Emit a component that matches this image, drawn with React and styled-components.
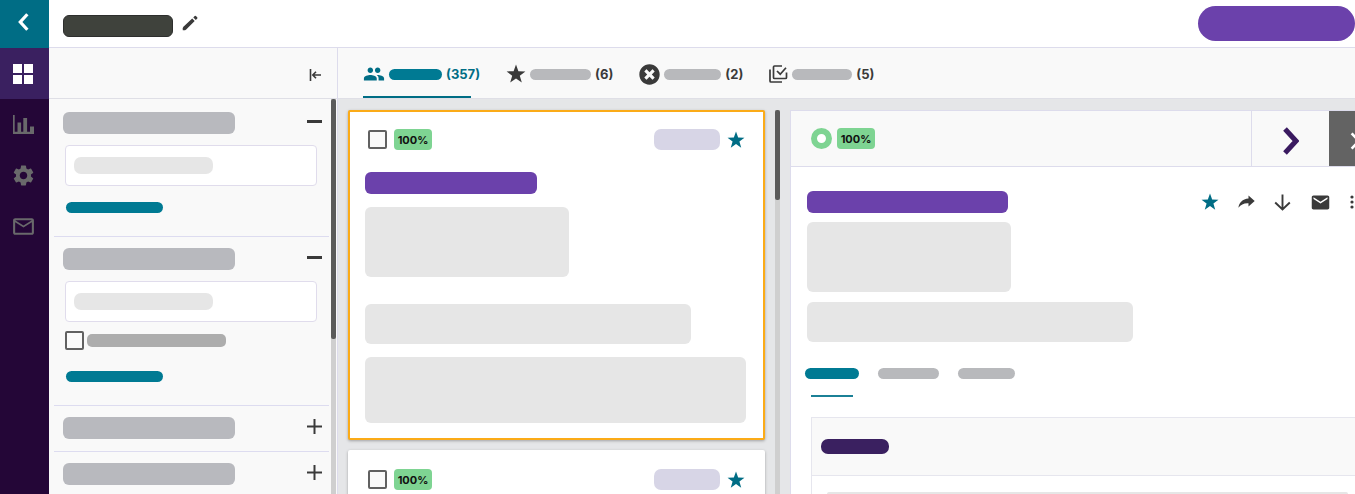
import React, { useState } from "react";
import styled, { createGlobalStyle, css } from "styled-components";
import { MdPeople, MdSettings, MdMailOutline, MdEmail } from "react-icons/md";
import { FaTimesCircle } from "react-icons/fa";

const Global = createGlobalStyle`
  * {
    box-sizing: border-box;
  }
  body {
    margin: 0;
    background: #ffffff;
    font-family: Inter, "Liberation Sans", sans-serif;
  }
  button {
    padding: 0;
    border: none;
    background: none;
    font: inherit;
    color: inherit;
    cursor: pointer;
  }
`;

//icons
const StarIcon = ({ size = 18 }) => (
  <svg width={size} height={size} viewBox="0 0 20 20" fill="currentColor">
    <path d="M10 .6l2.4 6.6 7 .2-5.600 4.300 2 6.800L10 14.500l-5.800 4 2-6.800L.6 7.400l7-.2z" />
  </svg>
);

const PencilIcon = () => (
  <svg width="16" height="16" viewBox="0 0 16 16" fill="#3a3a3a">
    <path d="M.8 15.200q-.6-2.200.6-3.400L10.200 3.600l2.500 2.500-8.500 8.300q-1.400 1.200-3.400.8z" />
    <path d="M11.300 2.400l1.400-1.400q.6-.5 1.200 0l1.300 1.300q.5.6 0 1.200L13.800 4.900z" />
  </svg>
);

const CollapseIcon = () => (
  <svg width="13" height="14" viewBox="0 0 13 14" fill="none" stroke="#3a3a3a" strokeWidth="1.6">
    <path d="M1.500 1v12M3.500 7H12M7 3.800L3.800 7 7 10.200" />
  </svg>
);

const ChartIcon = () => (
  <svg width="21" height="19" viewBox="0 0 21 19" fill="currentColor">
    <path d="M0 0h1.700v16.800h2.800V7.500h3.600v9.300h2.200V3h3.800v13.800h2.900v-5.300H21V19H0z" />
  </svg>
);

const GridIcon = () => (
  <svg width="20" height="20" viewBox="0 0 20 20" fill="currentColor">
    <path d="M0 0h9v9H0zM11 0h9v9h-9zM0 11h9v9H0zM11 11h9v9h-9z" />
  </svg>
);

const StackCheckIcon = () => (
  <svg width="19" height="18" viewBox="0 0 19 18" fill="none" stroke="currentColor" strokeWidth="1.700">
    <path d="M1 4.500v11.500q0 1 1 1h11" />
    <path d="M13 1H5.500q-1 0-1 1v10.500q0 1 1 1h11q1 0 1-1V7.500" />
    <path d="M8 6l3.200 3.200L17 2.800" />
  </svg>
);

const ShareIcon = () => (
  <svg width="17" height="14" viewBox="0 0 17 14" fill="currentColor">
    <path d="M10.500.5L16.700 6l-6.200 5.500V8.300C6 8 3 9.500.4 12.800 1 8 4.500 4 10.500 3.600z" />
  </svg>
);

const DownIcon = () => (
  <svg width="17" height="17" viewBox="0 0 17 17" fill="none" stroke="currentColor" strokeWidth="1.900">
    <path d="M8.500.5v15M1.200 8.500l7.300 7 7.300-7" />
  </svg>
);

const DotsIcon = () => (
  <svg width="4" height="14" viewBox="0 0 4 14" fill="currentColor">
    <circle cx="2" cy="2" r="1.600" />
    <circle cx="2" cy="7" r="1.600" />
    <circle cx="2" cy="12" r="1.600" />
  </svg>
);

const Chevron = ({ width, height, stroke, left }) => (
  <svg
    width={width}
    height={height}
    viewBox="0 0 16 28"
    fill="none"
    stroke="currentColor"
    strokeWidth={stroke}
  >
    <path d={left ? "M14 2L3 14l11 12" : "M2 2l11 12L2 26"} />
  </svg>
);

const ToggleIcon = ({ open }) => (
  <svg width="15" height="15" viewBox="0 0 15 15" fill="none" stroke="#3a3a3a">
    <path d="M0 7.500h15" strokeWidth={open ? 3 : 2} />
    {!open && <path d="M7.500 0v15" strokeWidth="2" />}
  </svg>
);

const filters = [
  { id: "first", open: true },
  { id: "second", open: true, check: true },
  { id: "third", open: false },
  { id: "fourth", open: false }
];

const tabs = [
  { id: "all", icon: <MdPeople size={22} />, width: 53, count: 357 },
  { id: "starred", icon: <StarIcon size={20} />, width: 61, count: 6 },
  { id: "rejected", icon: <FaTimesCircle size={21} />, width: 57, count: 2 },
  { id: "selected", icon: <StackCheckIcon />, width: 60, count: 5 }
];

const FilterSection = ({ filter }) => {
  const [open, setOpen] = useState(filter.open);
  return (
    <Section $open={open}>
      <SectionHead
        aria-label="Toggle filter"
        aria-expanded={open}
        onClick={() => setOpen(!open)}
      >
        <Bar $w={172} $h={22} $r={6} $color="#b8b9be" />
        <ToggleIcon open={open} />
      </SectionHead>
      {open && (
        <SectionBody>
          <Field>
            <Bar $w={139} $h={17} $r={7} $color="#e6e6e6" />
            <FieldInput type="text" aria-label="Filter value" />
          </Field>
          {filter.check && (
            <CheckRow>
              <Checkbox type="checkbox" aria-label="Include" />
              <Bar $w={139} $h={13} $r={5} $color="#adadad" />
            </CheckRow>
          )}
          <FilterLink href="#" aria-label="More options" $far={filter.check}>
            <Bar $w={97} $h={11} $r={6} $color="#007a93" />
          </FilterLink>
        </SectionBody>
      )}
    </Section>
  );
};

const CandidateCard = ({ selected }) => (
  <Card $selected={selected}>
    <CardTop>
      <Checkbox type="checkbox" aria-label="Select candidate" />
      <Badge>100%</Badge>
      <Spacer />
      <Bar $w={66} $h={21} $r={7} $color="#d7d5e6" />
      <StarButton aria-label="Star">
        <StarIcon />
      </StarButton>
    </CardTop>
    <Bar $w={172} $h={22} $r={6} $color="#6b41ab" />
    <CardBlocks>
      <Bar $w={204} $h={70} $r={6} $color="#e6e6e6" />
      <Bar $w={326} $h={40} $r={6} $color="#e6e6e6" $gap={27} />
      <Bar $h={66} $r={6} $color="#e6e6e6" $gap={13} />
    </CardBlocks>
  </Card>
);

const App = () => {
  const [tab, setTab] = useState("all");

  return (
    <>
      <Global />
      <Page>
        <Rail>
          <BackButton aria-label="Back">
            <Chevron left width={11} height={18} stroke={5} />
          </BackButton>
          <RailLink href="#" aria-label="Dashboard" $active>
            <GridIcon />
          </RailLink>
          <RailLink href="#" aria-label="Reports">
            <ChartIcon />
          </RailLink>
          <RailLink href="#" aria-label="Settings">
            <MdSettings size={25} />
          </RailLink>
          <RailLink href="#" aria-label="Messages">
            <MdMailOutline size={25} />
          </RailLink>
        </Rail>
        <Main>
          <Header>
            <TitleBar />
            <EditButton aria-label="Edit title">
              <PencilIcon />
            </EditButton>
            <Spacer />
            <ActionButton aria-label="Primary action" />
          </Header>
          <Body>
            <Sidebar>
              <SidebarHead>
                <button aria-label="Collapse filters">
                  <CollapseIcon />
                </button>
              </SidebarHead>
              <SidebarScroll>
                <FilterList>
                  {filters.map(filter => (
                    <FilterSection key={filter.id} filter={filter} />
                  ))}
                </FilterList>
                <Track>
                  <Thumb $h={240} />
                </Track>
              </SidebarScroll>
            </Sidebar>
            <Content>
              <TabBar>
                {tabs.map(item => (
                  <Tab
                    key={item.id}
                    $active={tab === item.id}
                    onClick={() => setTab(item.id)}
                  >
                    {item.icon}
                    <Bar
                      $w={item.width}
                      $h={11}
                      $r={6}
                      $color={tab === item.id ? "#007a93" : "#b8b9bc"}
                    />
                    <span>({item.count})</span>
                  </Tab>
                ))}
              </TabBar>
              <Columns>
                <CardList>
                  <CandidateCard selected />
                  <CandidateCard />
                </CardList>
                <Track>
                  <Thumb $h={90} />
                </Track>
                <Detail>
                  <DetailHead>
                    <Ring />
                    <Badge>100%</Badge>
                    <Spacer />
                    <NextButton aria-label="Next candidate">
                      <Chevron width={16} height={28} stroke={5} />
                    </NextButton>
                    <CloseButton aria-label="Close panel">
                      <Chevron width={11} height={18} stroke={4} />
                    </CloseButton>
                  </DetailHead>
                  <DetailBody>
                    <Summary>
                      <SummaryTop>
                        <Bar $w={201} $h={22} $r={6} $color="#6b41ab" />
                        <Actions>
                          <StarButton aria-label="Star">
                            <StarIcon />
                          </StarButton>
                          <button aria-label="Share">
                            <ShareIcon />
                          </button>
                          <button aria-label="Download">
                            <DownIcon />
                          </button>
                          <button aria-label="Email">
                            <MdEmail size={21} />
                          </button>
                          <button aria-label="More">
                            <DotsIcon />
                          </button>
                        </Actions>
                      </SummaryTop>
                      <Bar $w={204} $h={70} $r={6} $color="#e6e6e6" $gap={9} />
                      <Bar $w={326} $h={40} $r={6} $color="#e6e6e6" $gap={10} />
                    </Summary>
                    <DetailTabs>
                      <DetailTab aria-label="Overview" $active>
                        <Bar $w={54} $h={11} $r={6} $color="#007a93" />
                      </DetailTab>
                      <DetailTab aria-label="Activity">
                        <Bar $w={61} $h={11} $r={6} $color="#b8b9bc" />
                      </DetailTab>
                      <DetailTab aria-label="Notes">
                        <Bar $w={57} $h={11} $r={6} $color="#b8b9bc" />
                      </DetailTab>
                    </DetailTabs>
                    <Box>
                      <BoxHead>
                        <Bar $w={68} $h={15} $r={7} $color="#3a2060" />
                      </BoxHead>
                      <BoxBody>
                        <Bar $h={40} $r={2} $color="#e6e6e6" />
                      </BoxBody>
                    </Box>
                  </DetailBody>
                </Detail>
              </Columns>
            </Content>
          </Body>
        </Main>
      </Page>
    </>
  );
};

export default App;

const Page = styled.div`
  display: flex;
  height: 100vh;
  overflow: hidden;
  color: #3a3a3a;
  svg {
    display: block;
    flex-shrink: 0;
  }
`;
const Bar = styled.span`
  display: block;
  flex-shrink: 0;
  width: ${p => (p.$w ? `${p.$w}px` : "100%")};
  height: ${p => p.$h}px;
  margin-top: ${p => p.$gap || 0}px;
  border-radius: ${p => p.$r}px;
  background: ${p => p.$color};
`;
const Spacer = styled.div`
  flex: 1;
`;

//left rail
const Rail = styled.nav`
  display: flex;
  flex-direction: column;
  flex-shrink: 0;
  width: 49px;
  background: #240637;
`;
const railItem = css`
  display: flex;
  align-items: center;
  justify-content: center;
  padding-right: 3px;
`;
const BackButton = styled.button`
  ${railItem}
  height: 48px;
  padding: 0 2px 4px 0;
  background: #006d85;
  color: #ffffff;
`;
const RailLink = styled.a`
  ${railItem}
  height: 51px;
  color: ${p => (p.$active ? "#ffffff" : "#69696b")};
  background: ${p => (p.$active ? "#3a2060" : "transparent")};
`;

//header
const Main = styled.div`
  display: flex;
  flex-direction: column;
  flex: 1;
  min-width: 0;
`;
const Header = styled.header`
  display: flex;
  align-items: flex-start;
  height: 48px;
  padding: 6px 0 0 14px;
  border-bottom: 1px solid #dddcec;
`;
const TitleBar = styled.div`
  width: 110px;
  height: 22px;
  margin-top: 9px;
  border: 1px solid #2d2e2d;
  border-radius: 6px;
  background: #3f423c;
`;
const EditButton = styled.button`
  margin: 9px 0 0 9px;
`;
const ActionButton = styled.button`
  width: 157px;
  height: 35px;
  border-radius: 18px;
  background: #6b41ab;
`;

//filters
const Body = styled.div`
  display: flex;
  flex: 1;
  min-height: 0;
`;
const Sidebar = styled.aside`
  display: flex;
  flex-direction: column;
  flex-shrink: 0;
  width: 289px;
  border-right: 1px solid #dddcec;
  background: #f9f9f9;
`;
const SidebarHead = styled.div`
  display: flex;
  align-items: center;
  justify-content: flex-end;
  flex-shrink: 0;
  height: 51px;
  padding: 3px 15px 0 0;
  border-bottom: 1px solid #dfdfe6;
`;
const SidebarScroll = styled.div`
  display: flex;
  flex: 1;
  min-height: 0;
  padding-right: 1px;
`;
const FilterList = styled.div`
  flex: 1;
  padding: 2px 2px 0 5px;
  overflow: hidden;
`;
const Section = styled.section`
  padding: 11px 7px ${p => (p.$open ? 23 : 12)}px 9px;
  border-bottom: 1px solid #dddcf0;
`;
const SectionHead = styled.button`
  display: flex;
  align-items: center;
  justify-content: space-between;
  width: 100%;
  svg {
    margin-bottom: 3px;
  }
`;
const SectionBody = styled.div`
  padding: 11px 5px 0 2px;
`;
const Field = styled.label`
  display: flex;
  align-items: center;
  height: 41px;
  padding: 0 8px;
  border: 1px solid #e0dcec;
  border-radius: 4px;
  background: #ffffff;
`;
const FieldInput = styled.input`
  flex: 1;
  min-width: 0;
  height: 100%;
  border: none;
  outline: none;
  background: transparent;
`;
const CheckRow = styled.label`
  display: flex;
  align-items: center;
  gap: 3px;
  margin-top: 9px;
`;
const Checkbox = styled.input`
  appearance: none;
  flex-shrink: 0;
  width: 19px;
  height: 19px;
  margin: 0;
  border: 2px solid #616161;
  border-radius: 2px;
  background: #fafafa;
`;
const FilterLink = styled.a`
  display: block;
  width: fit-content;
  margin: ${p => (p.$far ? 21 : 16)}px 0 0 1px;
`;
const Track = styled.div`
  flex-shrink: 0;
  width: 5px;
  background: #cfcfcf;
`;
const Thumb = styled.div`
  height: ${p => p.$h}px;
  border-radius: 2px;
  background: #5b5b5b;
`;

//tabs
const Content = styled.div`
  display: flex;
  flex-direction: column;
  flex: 1;
  min-width: 0;
  background: #e5e6e8;
`;
const TabBar = styled.div`
  display: flex;
  flex-shrink: 0;
  gap: 26px;
  height: 51px;
  padding-left: 25px;
  border-bottom: 1px solid #dfdfe6;
  background: #f9f9f9;
`;
const Tab = styled.button`
  display: flex;
  align-items: center;
  gap: 4px;
  padding-top: 2px;
  color: ${p => (p.$active ? "#006d85" : "#3a3a3a")};
  font-size: 13px;
  font-weight: 700;
  ${p =>
    p.$active &&
    css`
      background: linear-gradient(#006d85, #006d85) left bottom /
        calc(100% - 9px) 2px no-repeat;
    `}
`;

//cards
const Columns = styled.div`
  display: flex;
  flex: 1;
  gap: 10px;
  min-height: 0;
  padding: 11px 0 0 10px;
  overflow: hidden;
`;
const CardList = styled.div`
  display: flex;
  flex-direction: column;
  gap: 10px;
  flex-shrink: 0;
  width: 417px;
`;
const Card = styled.article`
  flex-shrink: 0;
  padding: 17px 17px 15px 15px;
  border: 2px solid ${p => (p.$selected ? "#fbab18" : "#ffffff")};
  border-radius: 2px;
  background: #ffffff;
  box-shadow: 0 1px 3px rgba(0, 0, 0, 0.3);
`;
const CardTop = styled.div`
  display: flex;
  align-items: center;
  gap: 7px;
  margin-bottom: 22px;
  padding: 0 1px 0 3px;
`;
const CardBlocks = styled.div`
  margin-top: 13px;
`;
const Badge = styled.span`
  display: flex;
  align-items: center;
  justify-content: center;
  width: 38px;
  height: 21px;
  border-radius: 4px;
  background: #7ed492;
  color: #111111;
  font-size: 11px;
  font-weight: 700;
`;
const StarButton = styled.button`
  color: #006d85;
`;

//detail panel, runs past the right edge of the window
const Detail = styled.section`
  display: flex;
  flex-direction: column;
  flex: 1;
  min-width: 0;
  margin-right: -27px;
  border: 1px solid #dddcec;
  border-bottom: none;
  background: #ffffff;
`;
const DetailHead = styled.div`
  display: flex;
  align-items: center;
  flex-shrink: 0;
  gap: 5px;
  height: 56px;
  padding-left: 20px;
  border-bottom: 1px solid #dddcec;
  background: #f9f9f9;
`;
const Ring = styled.span`
  width: 21px;
  height: 21px;
  border: 6px solid #7ed492;
  border-radius: 50%;
  background: #ffffff;
`;
const NextButton = styled.button`
  display: flex;
  align-items: center;
  justify-content: center;
  align-self: stretch;
  width: 78px;
  margin-right: -5px;
  padding-top: 4px;
  border-left: 1px solid #dddcec;
  color: #3a1a60;
`;
const CloseButton = styled.button`
  display: flex;
  align-items: center;
  justify-content: center;
  align-self: stretch;
  width: 52px;
  padding-top: 4px;
  background: #636363;
  color: #ffffff;
`;
const DetailBody = styled.div`
  padding: 24px 0 0 14px;
`;
const Summary = styled.div`
  padding-left: 2px;
`;
const SummaryTop = styled.div`
  display: flex;
  align-items: center;
  justify-content: space-between;
`;
const Actions = styled.div`
  display: flex;
  align-items: center;
  gap: 19px;
  padding-right: 27px;
`;
const DetailTabs = styled.div`
  display: flex;
  gap: 19px;
  margin-top: 26px;
`;
const DetailTab = styled.button`
  display: flex;
  flex-direction: column;
  align-items: center;
  gap: 16px;
  &::after {
    content: "";
    width: 42px;
    height: 2px;
    background: ${p => (p.$active ? "#1b8096" : "transparent")};
  }
`;
const Box = styled.div`
  margin: 20px 0 0 6px;
  border: 1px solid #e6e6ee;
`;
const BoxHead = styled.div`
  display: flex;
  align-items: center;
  height: 58px;
  padding-left: 9px;
  border-bottom: 1px solid #e6e6ee;
  background: #f9f9f9;
`;
const BoxBody = styled.div`
  padding: 16px 32px 16px 15px;
`;
